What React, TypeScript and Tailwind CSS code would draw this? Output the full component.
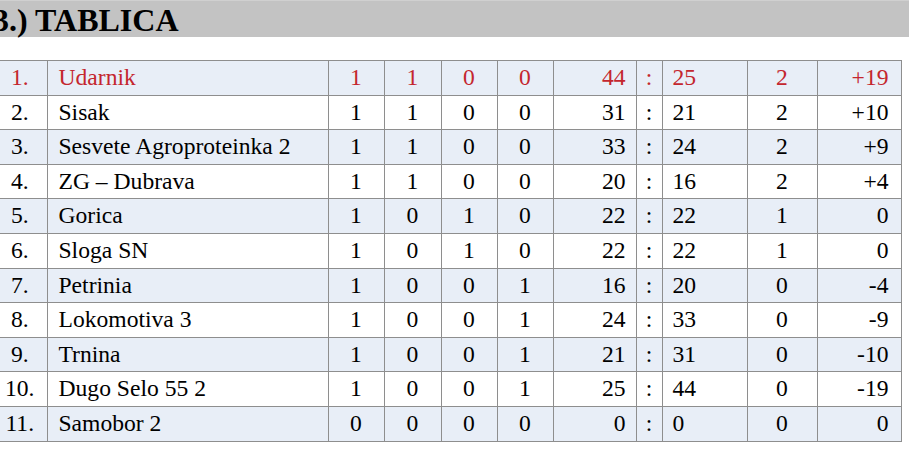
import React from "react";

type Row = [string, string, string, string, string, string, string, string, string, string];

const rows: Row[] = [
  ["1.", "Udarnik", "1", "1", "0", "0", "44", "25", "2", "+19"],
  ["2.", "Sisak", "1", "1", "0", "0", "31", "21", "2", "+10"],
  ["3.", "Sesvete Agroproteinka 2", "1", "1", "0", "0", "33", "24", "2", "+9"],
  ["4.", "ZG – Dubrava", "1", "1", "0", "0", "20", "16", "2", "+4"],
  ["5.", "Gorica", "1", "0", "1", "0", "22", "22", "1", "0"],
  ["6.", "Sloga SN", "1", "0", "1", "0", "22", "22", "1", "0"],
  ["7.", "Petrinia", "1", "0", "0", "1", "16", "20", "0", "-4"],
  ["8.", "Lokomotiva 3", "1", "0", "0", "1", "24", "33", "0", "-9"],
  ["9.", "Trnina", "1", "0", "0", "1", "21", "31", "0", "-10"],
  ["10.", "Dugo Selo 55 2", "1", "0", "0", "1", "25", "44", "0", "-19"],
  ["11.", "Samobor 2", "0", "0", "0", "0", "0", "0", "0", "0"],
];

export default function App() {
  const cell = "border border-[#8e8e8e] p-0 leading-none";
  return (
    <div
      className="w-[909px] h-[476px] bg-white overflow-hidden"
      style={{ fontFamily: '"Liberation Serif", "Times New Roman", serif' }}
    >
      <div className="h-[37px] bg-[#c3c3c3] border-t border-[#d0d0d0] flex items-center">
        <h1 className="ml-[-7px] text-[32px] font-bold text-black leading-none mt-[1px]">3.) TABLICA</h1>
      </div>
      <table className="mt-[23px] ml-[-7px] w-[908px] table-fixed border-collapse text-[23.6px]">
        <colgroup>
          <col className="w-[54px]" />
          <col className="w-[281px]" />
          <col className="w-[56px]" />
          <col className="w-[57px]" />
          <col className="w-[56px]" />
          <col className="w-[56px]" />
          <col className="w-[83px]" />
          <col className="w-[26px]" />
          <col className="w-[85px]" />
          <col className="w-[70px]" />
          <col className="w-[84px]" />
        </colgroup>
        <tbody>
          {rows.map((r, i) => {
            const bg = i % 2 === 0 ? "bg-[#e8eef7]" : "bg-white";
            const color = i === 0 ? "text-[#c4262e]" : "text-black";
            return (
              <tr key={i} className={`h-[34.6px] ${bg} ${color}`}>
                <td className={`${cell} text-center border-l-0`}>{r[0]}</td>
                <td className={`${cell} text-left pl-[11px] whitespace-nowrap`}>{r[1]}</td>
                <td className={`${cell} text-center`}>{r[2]}</td>
                <td className={`${cell} text-center`}>{r[3]}</td>
                <td className={`${cell} text-center`}>{r[4]}</td>
                <td className={`${cell} text-center`}>{r[5]}</td>
                <td className={`${cell} text-right pr-[10px]`}>{r[6]}</td>
                <td className={`${cell} text-center`}>:</td>
                <td className={`${cell} text-left pl-[10px]`}>{r[7]}</td>
                <td className={`${cell} text-center`}>{r[8]}</td>
                <td className={`${cell} text-right pr-[12px]`}>{r[9]}</td>
              </tr>
            );
          })}
        </tbody>
      </table>
    </div>
  );
}
